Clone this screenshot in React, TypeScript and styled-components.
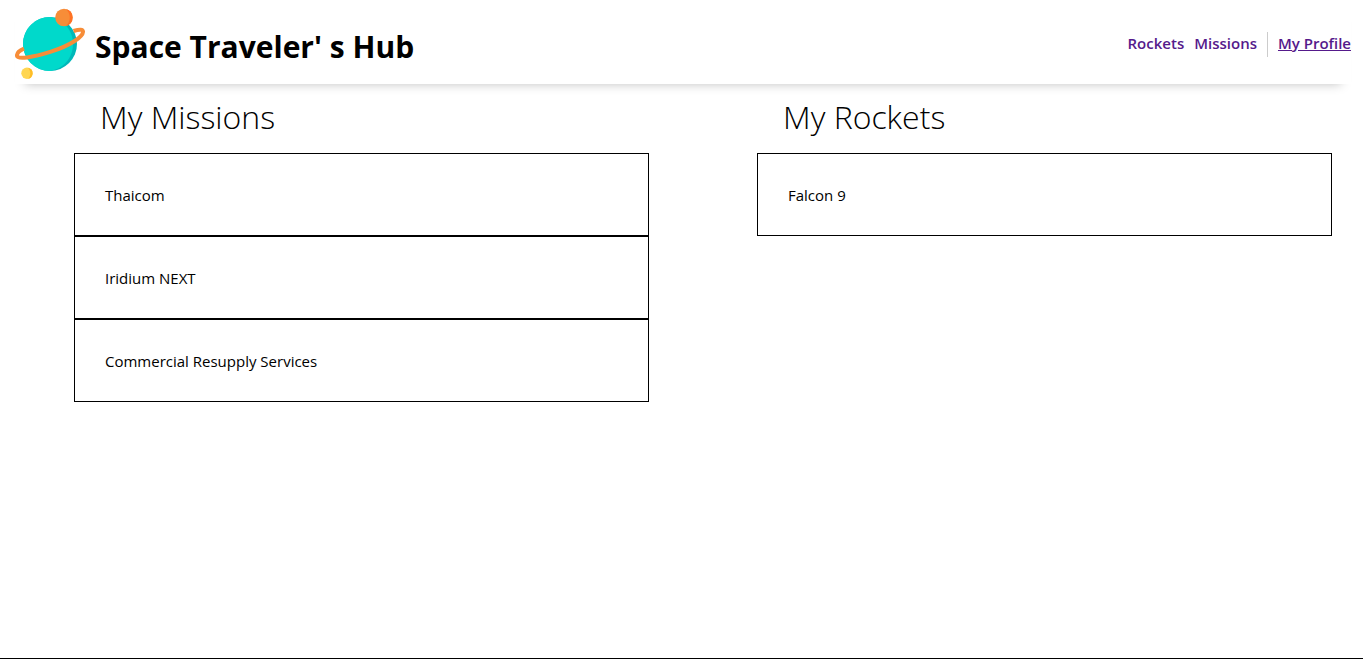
import React from 'react';
import styled, { createGlobalStyle } from 'styled-components';

const GlobalStyle = createGlobalStyle`
  *, *::before, *::after { box-sizing: border-box; }
  body {
    margin: 0;
    background: #fff;
    color: #000;
    font-family: "Segoe UI", "Open Sans", "Noto Sans", sans-serif;
  }
`;

const Page = styled.div`
  display: flex;
  flex-direction: column;
  min-height: 100vh;
  border-bottom: 1px solid #000;
`;

const Header = styled.header`
  display: flex;
  align-items: center;
  justify-content: space-between;
  height: 84px;
  margin: 0 12px 0 15px;
  box-shadow: 0 10px 10px -10px rgba(0, 0, 0, 0.25);
`;

const Brand = styled.div`
  display: flex;
  align-items: center;
  gap: 10px;
  padding-top: 4px;
`;

const Title = styled.h1`
  margin: 0;
  padding-top: 6px;
  font-size: 30px;
  line-height: 42px;
  font-weight: 700;
  white-space: nowrap;
`;

const Nav = styled.nav`
  display: flex;
  align-items: center;
  gap: 10px;
  padding-top: 4px;
`;

const NavLink = styled.a<{ $active?: boolean }>`
  color: #551a8b;
  font-size: 15px;
  line-height: 22px;
  padding-bottom: 2px;
  font-weight: 600;
  text-decoration: ${({ $active }) => ($active ? 'underline' : 'none')};
  white-space: nowrap;
`;

const Divider = styled.span`
  width: 1px;
  height: 25px;
  background: #ccc;
`;

const Main = styled.main`
  display: grid;
  grid-template-columns: 1fr 1fr;
  column-gap: 108px;
  padding: 12px 31px 32px 74px;
`;

const Heading = styled.h2`
  margin: 0 0 16px;
  padding-left: 26px;
  font-size: 32px;
  line-height: 41px;
  font-weight: 300;
`;

const List = styled.ul`
  margin: 0;
  padding: 0;
  list-style: none;
`;

const Item = styled.li`
  padding: 31px 30px 29px;
  border: 1px solid #000;
  font-size: 15px;
  line-height: 21px;
  font-weight: 400;
`;

const Planet = () => (
  <svg width="70" height="72" viewBox="15 8 70 72" aria-hidden="true">
    <circle cx="50" cy="44" r="27" fill="#00b8b9" />
    <path d="M50 17C35 17 23 29 23 44S35 71 50 71C63 69 73 58 73 44S63 19 50 17Z" fill="#00d9cb" />
    <path
      d="M73.500 31C80 29 82.800 29.300 83 31.500C83.400 36.800 70 45.600 51 51.700C32 57.800 17.500 59.500 17 56C16.700 53.500 19 50.800 24 48.700"
      fill="none"
      stroke="#f78d38"
      strokeWidth="4"
    />
    <circle cx="64" cy="17.500" r="8.800" fill="#f78d38" />
    <path d="M66 9A8.800 8.800 0 0 1 66 26C71 21 71 14 66 9Z" fill="#ff7124" />
    <circle cx="27" cy="73.300" r="5.700" fill="#ffd652" />
    <path d="M28 67.700A5.700 5.700 0 0 1 28 78.900C31 75.500 31 71 28 67.700Z" fill="#ffbd27" />
  </svg>
);

const Section = ({ title, items }: { title: string; items: string[] }) => (
  <section>
    <Heading>{title}</Heading>
    <List>
      {items.map((item) => (
        <Item key={item}>{item}</Item>
      ))}
    </List>
  </section>
);

const missions = ['Thaicom', 'Iridium NEXT', 'Commercial Resupply Services'];
const rockets = ['Falcon 9'];

export default function App() {
  return (
    <Page>
      <GlobalStyle />
      <Header>
        <Brand>
          <Planet />
          <Title>Space Traveler&apos; s Hub</Title>
        </Brand>
        <Nav>
          <NavLink href="#rockets">Rockets</NavLink>
          <NavLink href="#missions">Missions</NavLink>
          <Divider />
          <NavLink href="#profile" $active aria-current="page">My Profile</NavLink>
        </Nav>
      </Header>
      <Main>
        <Section title="My Missions" items={missions} />
        <Section title="My Rockets" items={rockets} />
      </Main>
    </Page>
  );
}
